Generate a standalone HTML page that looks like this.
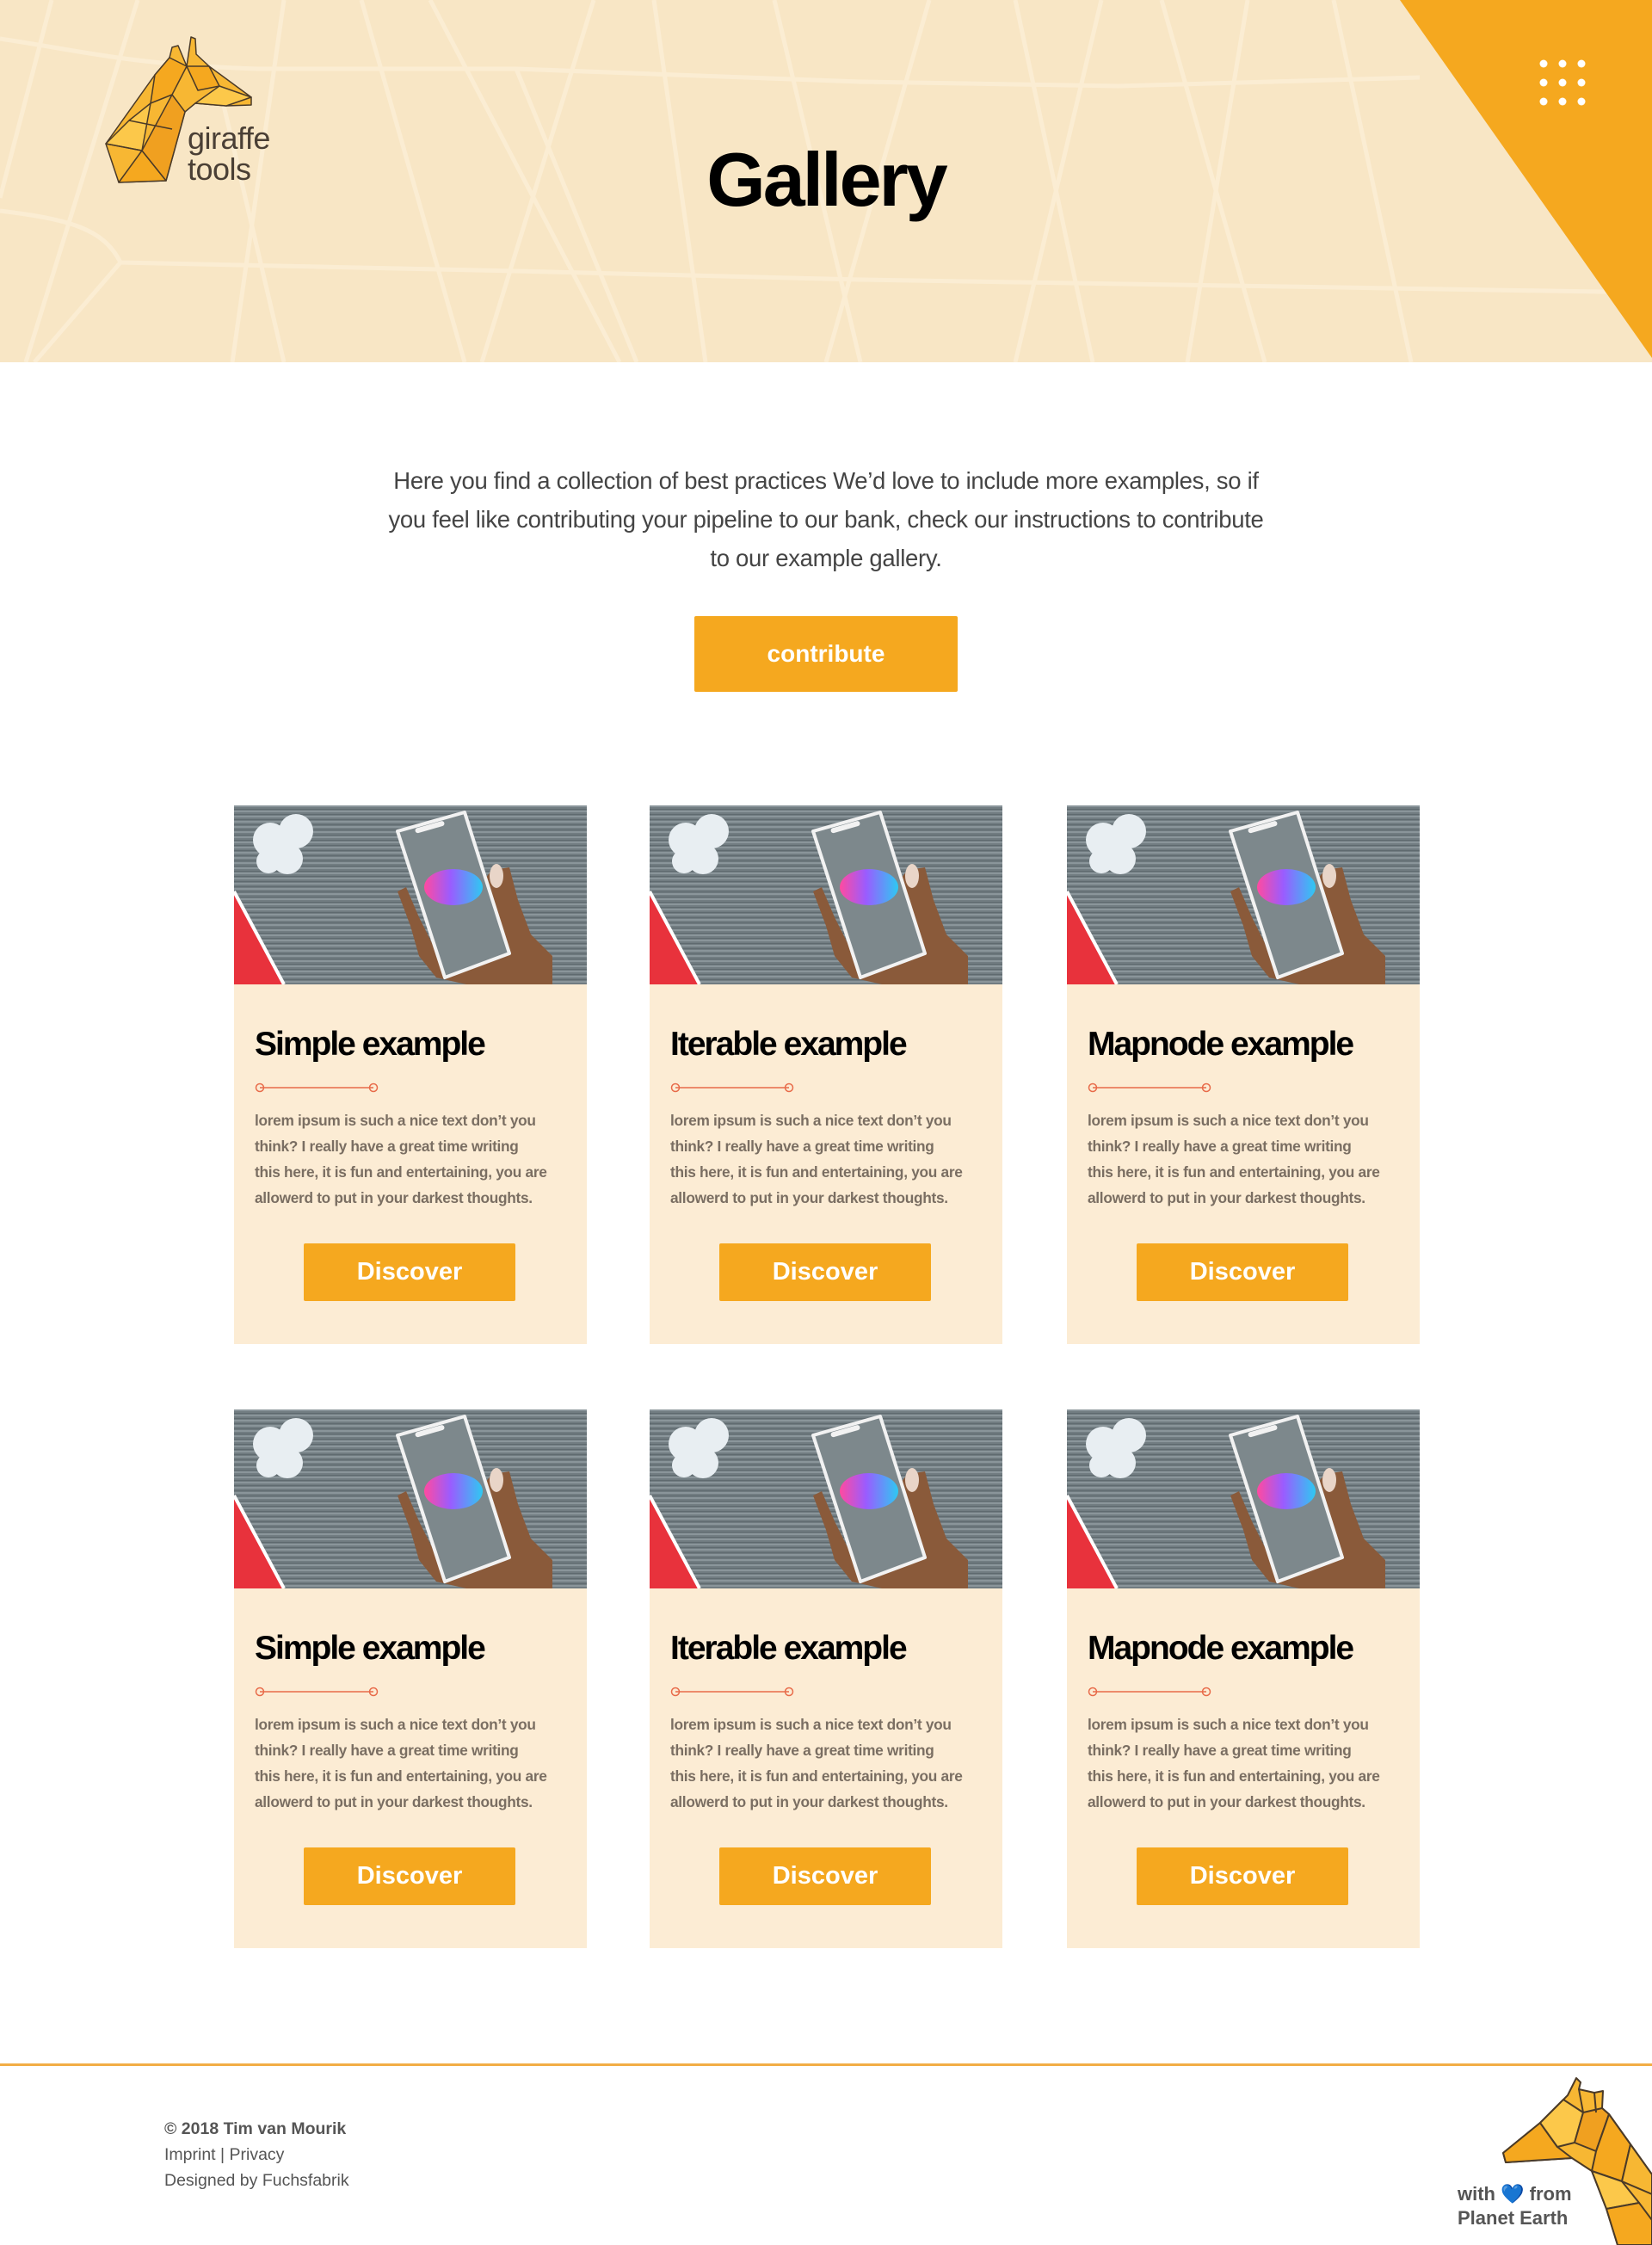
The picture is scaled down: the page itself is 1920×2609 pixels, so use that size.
<!DOCTYPE html>
<html><head><meta charset="utf-8">
<style>
*{margin:0;padding:0;box-sizing:border-box}
body{width:1920px;height:2609px;background:#fff;position:relative;font-family:"Liberation Sans",sans-serif;overflow:hidden}
.abs{position:absolute}
.hdr{left:0;top:0;width:1920px;height:421px;background:#f8e6c5}
.title{left:0;width:1920px;top:158px;text-align:center;font-size:88px;font-weight:bold;letter-spacing:-3px;color:#000}
.logo-t{left:218px;font-size:36px;color:#4a3f35;line-height:36px;letter-spacing:-0.5px}
.intro{left:360px;width:1200px;top:536px;text-align:center;font-size:27.5px;line-height:45px;color:#444;letter-spacing:-0.3px}
.btn{background:#f5a81f;color:#fff;text-align:center;border-radius:2px}
.card{width:410px;height:626px;background:#fcecd4}
.card svg{display:block}
.card h3{position:absolute;left:24px;top:256px;font-size:39px;letter-spacing:-2px;color:#000;font-weight:bold}
.card .dv{position:absolute;left:24px;top:253px}
.card p{position:absolute;left:24px;top:351px;font-size:17.3px;line-height:30px;color:#7a6e62;font-weight:bold;letter-spacing:-0.3px;white-space:nowrap}
.card .b{position:absolute;left:81px;top:509px;width:246px;height:67px;font-size:29px;line-height:67px;font-weight:bold}
.foot{left:191px;font-size:19.5px;color:#555;line-height:30px}
</style></head><body>
<svg width="0" height="0" style="position:absolute">
<defs>
<linearGradient id="br" x1="0" y1="0" x2="1" y2="0"><stop offset="0" stop-color="#ff4aa0"/><stop offset=".45" stop-color="#9a5cff"/><stop offset="1" stop-color="#2ec9f2"/></linearGradient>
<pattern id="st" width="410" height="6" patternUnits="userSpaceOnUse"><rect width="410" height="6" fill="#717c81"/><rect y="0" width="410" height="2" fill="#8a959a"/><rect y="4" width="410" height="1" fill="#5f6a6f"/></pattern>
<symbol id="img" viewBox="0 0 410 208">
<rect width="410" height="208" fill="url(#st)"/>
<polygon points="0,100 58,208 0,208" fill="#e8323c"/>
<line x1="0" y1="100" x2="58" y2="208" stroke="#fff" stroke-width="4"/>
<g fill="#e8eef2"><circle cx="42" cy="40" r="20"/><circle cx="72" cy="30" r="20"/><circle cx="62" cy="62" r="18"/><circle cx="40" cy="65" r="14"/></g>
<path d="M300,75 L320,72 L330,110 L345,150 L370,175 L370,208 L270,208 L235,200 L215,175 L205,140 L190,100 L200,95 L215,130 L230,160Z" fill="#8a5a3a"/>
<ellipse cx="305" cy="82" rx="8" ry="14" fill="#e9d5c8"/>
<polygon points="190,30 268,8 320,172 245,200" fill="#7d888c" stroke="#f2f2f2" stroke-width="4" stroke-linejoin="round"/>
<rect x="210" y="22" width="35" height="6" rx="3" fill="#f2f2f2" transform="rotate(-16 228 25)"/>
<ellipse cx="255" cy="95" rx="34" ry="21" fill="url(#br)"/>
</symbol>
<symbol id="dv" viewBox="0 0 150 20">
<line x1="6" y1="10" x2="138" y2="10" stroke="#e86b4a" stroke-width="1.5"/>
<circle cx="6" cy="10" r="4.5" fill="none" stroke="#e86b4a" stroke-width="1.5"/>
<circle cx="138" cy="10" r="4.5" fill="none" stroke="#e86b4a" stroke-width="1.5"/>
</symbol>
</defs></svg>

<div class="abs hdr"></div>
<svg class="abs" style="left:0;top:0" width="1920" height="421">
<g stroke="#fff6e6" stroke-width="5" fill="none" opacity=".45">
<path d="M0,45 C100,60 150,75 300,80 L600,80 L1000,95 L1300,100 L1650,90"/>
<path d="M0,245 C80,255 120,265 140,305 L600,315 L1000,325 L1920,340"/>
<path d="M60,0 L0,230 M160,0 L30,421 M330,0 L270,421 M420,0 L540,421 M500,0 L720,421 M690,0 L560,421 M760,0 L820,421 M900,0 L1000,421 M1080,0 L960,421 M1180,0 L1270,421 M1280,0 L1180,421 M1350,0 L1470,421 M1450,0 L1380,421 M1550,0 L1640,421 M40,421 L140,305 M250,80 L330,421 M600,80 L740,421"/>
</g>
<polygon points="1627,0 1920,0 1920,416" fill="#f5a81f"/>
<g fill="#fff">
<circle cx="1794" cy="74" r="4.5"/><circle cx="1816" cy="74" r="4.5"/><circle cx="1838" cy="74" r="4.5"/>
<circle cx="1794" cy="96" r="4.5"/><circle cx="1816" cy="96" r="4.5"/><circle cx="1838" cy="96" r="4.5"/>
<circle cx="1794" cy="118" r="4.5"/><circle cx="1816" cy="118" r="4.5"/><circle cx="1838" cy="118" r="4.5"/>
</g>
<g stroke="#4a3a28" stroke-width="1.5" stroke-linejoin="round">
<polygon points="200,55 207,53 217,77 222,43 227,45 228,63 243,77 292,113 292,122 263,123 227,120 215,130 193,210 138,212 123,167 180,87 197,67" fill="#f7b733"/>
<polygon points="180,87 197,67 217,77 200,110 175,120" fill="#f5a81f"/>
<polygon points="123,167 150,140 175,120 165,175" fill="#fcc84a"/>
<polygon points="217,77 243,77 255,100 230,105" fill="#f5a81f"/>
<polygon points="255,100 292,113 263,123 227,120" fill="#fcc84a"/>
<polygon points="138,212 165,175 193,210" fill="#f5a81f"/>
<polygon points="165,175 200,110 215,130 193,210" fill="#f0a020"/>
<line x1="150" y1="140" x2="200" y2="150"/><line x1="123" y1="167" x2="165" y2="175"/>
</g>
</svg>
<div class="abs logo-t" style="top:143px">giraffe</div>
<div class="abs logo-t" style="top:179px">tools</div>
<div class="abs title">Gallery</div>

<div class="abs intro">Here you find a collection of best practices We’d love to include more examples, so if<br>you feel like contributing your pipeline to our bank, check our instructions to contribute<br>to our example gallery.</div>
<div class="abs btn" style="left:807px;top:716px;width:306px;height:88px;line-height:88px;font-size:28px;font-weight:bold">contribute</div>

<div class="abs card" style="left:272px;top:936px"><svg width="410" height="208"><use href="#img"/></svg><h3>Simple example</h3><svg class="dv" width="150" height="20" style="top:318px"><use href="#dv"/></svg><p>lorem ipsum is such a nice text don’t you<br>think? I really have a great time writing<br>this here, it is fun and entertaining, you are<br>allowerd to put in your darkest thoughts.</p><div class="btn b">Discover</div></div>
<div class="abs card" style="left:755px;top:936px"><svg width="410" height="208"><use href="#img"/></svg><h3>Iterable example</h3><svg class="dv" width="150" height="20" style="top:318px"><use href="#dv"/></svg><p>lorem ipsum is such a nice text don’t you<br>think? I really have a great time writing<br>this here, it is fun and entertaining, you are<br>allowerd to put in your darkest thoughts.</p><div class="btn b">Discover</div></div>
<div class="abs card" style="left:1240px;top:936px"><svg width="410" height="208"><use href="#img"/></svg><h3>Mapnode example</h3><svg class="dv" width="150" height="20" style="top:318px"><use href="#dv"/></svg><p>lorem ipsum is such a nice text don’t you<br>think? I really have a great time writing<br>this here, it is fun and entertaining, you are<br>allowerd to put in your darkest thoughts.</p><div class="btn b">Discover</div></div>

<div class="abs card" style="left:272px;top:1638px"><svg width="410" height="208"><use href="#img"/></svg><h3>Simple example</h3><svg class="dv" width="150" height="20" style="top:318px"><use href="#dv"/></svg><p>lorem ipsum is such a nice text don’t you<br>think? I really have a great time writing<br>this here, it is fun and entertaining, you are<br>allowerd to put in your darkest thoughts.</p><div class="btn b">Discover</div></div>
<div class="abs card" style="left:755px;top:1638px"><svg width="410" height="208"><use href="#img"/></svg><h3>Iterable example</h3><svg class="dv" width="150" height="20" style="top:318px"><use href="#dv"/></svg><p>lorem ipsum is such a nice text don’t you<br>think? I really have a great time writing<br>this here, it is fun and entertaining, you are<br>allowerd to put in your darkest thoughts.</p><div class="btn b">Discover</div></div>
<div class="abs card" style="left:1240px;top:1638px"><svg width="410" height="208"><use href="#img"/></svg><h3>Mapnode example</h3><svg class="dv" width="150" height="20" style="top:318px"><use href="#dv"/></svg><p>lorem ipsum is such a nice text don’t you<br>think? I really have a great time writing<br>this here, it is fun and entertaining, you are<br>allowerd to put in your darkest thoughts.</p><div class="btn b">Discover</div></div>

<div class="abs" style="left:0;top:2398px;width:1920px;height:3px;background:#f2ad45"></div>
<div class="abs foot" style="top:2459px;font-weight:bold">© 2018 Tim van Mourik</div>
<div class="abs foot" style="top:2489px">Imprint | Privacy</div>
<div class="abs foot" style="top:2519px">Designed by Fuchsfabrik</div>
<svg class="abs" style="left:1680px;top:2400px" width="240" height="209">
<g stroke="#4a3a28" stroke-width="2" stroke-linejoin="round">
<polygon points="152,15 157,20 155,28 173,32 183,30 182,50 190,57 240,127 240,209 200,209 187,167 170,123 147,108 70,113 67,102 110,67 137,40 142,35" fill="#f7b733"/>
<polygon points="67,102 110,67 130,95 147,108 70,113" fill="#f5a81f"/>
<polygon points="110,67 137,40 160,55 150,90 130,95" fill="#fcc84a"/>
<polygon points="160,55 182,50 190,57 175,100 150,90" fill="#f0a020"/>
<polygon points="175,100 190,57 215,92 205,135 170,123" fill="#f5a81f"/>
<polygon points="170,123 205,135 225,160 187,167" fill="#fcc84a"/>
<polygon points="187,167 225,160 240,180 240,209 200,209" fill="#f5a81f"/>
<polygon points="205,135 215,92 240,127 240,150" fill="#f7b733"/>
<line x1="155" y1="28" x2="160" y2="55"/><line x1="173" y1="32" x2="175" y2="55"/>
</g>
</svg>
<div class="abs" style="left:1694px;top:2536px;font-size:22px;font-weight:bold;color:#555;line-height:28px">with <span style="color:#1a73e8">💙</span> from<br>Planet Earth</div>
</body></html>
